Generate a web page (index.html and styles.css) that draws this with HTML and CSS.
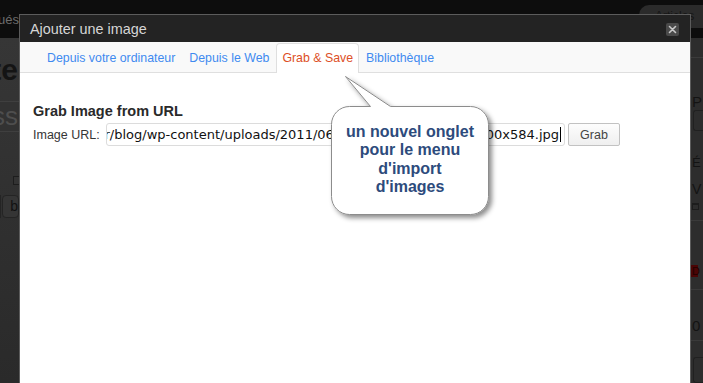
FILE: index.html
```html
<!DOCTYPE html>
<html lang="fr">
<head>
<meta charset="utf-8">
<title>Ajouter une image</title>
<link rel="stylesheet" href="styles.css">
</head>
<body>
<div class="admin">
  <div class="topbar">
    <div class="crumb"><span>Marqués</span></div>
    <div class="pill">Articles</div>
  </div>
  <div class="admin-main">
    <div class="side-left">
      <div class="ltitle"><span>Modifier la note</span></div>
      <div class="lfield"><span>wordpress</span></div>
      <div class="lcheck"></div>
      <div class="lbuttons"><span class="lbtn lbtn-a"></span><span class="lbtn lbtn-b">b</span></div>
    </div>
    <div class="center"></div>
    <div class="side-right">
      <div class="rpanel rp-head"><span>P</span></div>
      <div class="rbox"></div>
      <div class="rtext rt-e">É</div>
      <div class="rtext rt-v">V</div>
      <div class="rcal"></div>
      <div class="rline"></div>
      <div class="rred">D</div>
      <div class="rline rline-2"></div>
      <div class="rtext rt-0">0</div>
      <div class="rline rline-3"></div>
      <div class="rbox rbox-2"></div>
    </div>
  </div>
</div>

<div class="modal">
  <div class="modal-title">
    <span class="modal-name">Ajouter une image</span>
    <button class="close" aria-label="Fermer">
      <svg width="13" height="13" viewBox="0 0 13 13"><path d="M3.5 3.5 L9.5 9.5 M9.5 3.5 L3.5 9.5" stroke="#c8c8c8" stroke-width="1.6" stroke-linecap="round"/></svg>
    </button>
  </div>
  <nav class="tabs">
    <a class="tab">Depuis votre ordinateur</a>
    <a class="tab">Depuis le Web</a>
    <a class="tab active">Grab &amp; Save</a>
    <a class="tab">Bibliothèque</a>
  </nav>
  <div class="modal-body">
    <h3 class="grab-title">Grab Image from URL</h3>
    <div class="url-row">
      <label class="url-label">Image URL:</label>
      <div class="url-input"><span class="url-text">http://www.wordpress-fr/blog/wp-content/uploads/2011/06/capture-ecran-saved-800x584.jpg</span><span class="caret"></span></div>
      <button class="grab-btn">Grab</button>
    </div>
  </div>
</div>

<div class="callout">
  <svg class="callout-shape" width="180" height="160" viewBox="0 0 180 160">
    <defs>
      <filter id="sh" x="-20%" y="-20%" width="150%" height="150%">
        <feDropShadow dx="3" dy="3" stdDeviation="2.5" flood-color="#000" flood-opacity="0.45"/>
      </filter>
    </defs>
    <path d="M23.5 36.5 L44.5 36.5 L19.5 6.5 L64.5 36.5 L144.5 36.5 A18 18 0 0 1 162.5 54.5 L162.5 126.5 A18 18 0 0 1 144.5 144.5 L23.5 144.5 A18 18 0 0 1 5.5 126.5 L5.5 54.5 A18 18 0 0 1 23.5 36.5 Z" fill="#fff" stroke="#8c8c8c" stroke-width="1" filter="url(#sh)"/>
  </svg>
  <div class="callout-text">un nouvel onglet<br>pour le menu<br>d'import<br>d'images</div>
</div>
</body>
</html>
```
FILE: styles.css
```css
* { box-sizing: border-box; margin: 0; padding: 0; }
html, body { width: 703px; height: 383px; overflow: hidden; }
body {
  position: relative;
  background: #2c2c2c;
  font-family: "Liberation Sans", Arial, sans-serif;
}

/* dimmed admin page behind the dialog */
.admin { display: flex; flex-direction: column; height: 383px; }
.topbar { height: 38px; background: #0d0d0d; display: flex; align-items: flex-start; flex-shrink: 0; }
.crumb {
  width: 19px; overflow: hidden; display: flex; justify-content: flex-end;
  white-space: nowrap; color: #6c6c6c; font-size: 13px; line-height: 40px;
}
.pill {
  margin-left: auto; margin-top: 5px; width: 64px; height: 23px;
  background: #2b2b2b; border-radius: 10px 0 0 0;
  font-size: 12px; color: #151515; padding: 4px 0 0 16px; white-space: nowrap; overflow: hidden;
}
.admin-main { flex: 1; display: flex; min-height: 0; }
.side-left {
  width: 19px; overflow: hidden; display: flex; flex-direction: column;
  background: linear-gradient(#363636, #2a2a2a);
}
.ltitle {
  padding-top: 15px; height: 49px; display: flex; justify-content: flex-end;
  white-space: nowrap; font-size: 30px; line-height: 34px; font-weight: bold; color: #141414;
  padding-right: 1px;
}
.lfield {
  margin-top: 14px; height: 31px; border-top: 1px solid #3f3f3f; border-bottom: 1px solid #3f3f3f;
  background: #323232; display: flex; justify-content: flex-end; white-space: nowrap;
  font-size: 26px; line-height: 28px; color: #4e4e4e; padding-right: 1px;
}
.lcheck {
  margin: 44px 0 0 13px; width: 9px; height: 9px; border: 1px solid #1d1d1d; background: #333;
}
.lbuttons { margin-top: 10px; display: flex; gap: 1px; height: 23px; }
.lbtn { height: 23px; border: 1px solid #242424; border-radius: 4px; background: #353535; }
.lbtn-a { width: 3px; border-left: none; border-radius: 0 4px 4px 0; }
.lbtn-b { width: 30px; padding-left: 7px; font-size: 14px; line-height: 20px; color: #111; }
.center { flex: 1; }

.side-right {
  width: 12px; background: #2d2d2d; display: flex; flex-direction: column; overflow: hidden;
  color: #131313; font-size: 13px;
}
.rpanel { border-top: 1px solid #3b3b3b; }
.rp-head { margin-top: 19px; height: 63px; padding: 36px 0 0 1px; line-height: 16px; font-size: 15px; }
.rbox { margin-left: 2px; width: 12px; height: 32px; border: 1px solid #202020; border-right: none; border-radius: 3px 0 0 3px; }
.rtext { padding-left: 1px; line-height: 16px; }
.rt-e { margin-top: 24px; }
.rt-v { margin-top: 10px; font-size: 14px; }
.rcal { margin: 6px 0 0 1px; width: 7px; height: 9px; border: 1px solid #1c1c1c; border-top-width: 2px; }
.rline { margin-top: 10px; height: 1px; background: #3a3a3a; }
.rred { margin-top: 44px; width: 7px; height: 12px; background: #4a0505; color: #220000; font-size: 11px; line-height: 12px; padding-left: 1px; }
.rline-2 { margin-top: 12px; }
.rt-0 { margin-top: 29px; font-size: 15px; }
.rline-3 { margin-top: 6px; }
.rbox-2 { margin-top: 16px; height: 40px; }

/* dialog */
.modal {
  position: absolute; left: 19px; top: 14px; width: 672px; height: 380px;
  border: 1px solid #5c5c5c; background: #fff; display: flex; flex-direction: column;
}
.modal-title {
  height: 27px; background: #232323; display: flex; align-items: center;
  padding: 0 11px 0 10px; flex-shrink: 0;
}
.modal-name { color: #d6d6d6; font-size: 14.4px; flex: 1; padding-top: 1px; }
.close {
  width: 13px; height: 13px; border: none; border-radius: 2px; background: #4a4a4a;
  display: flex; align-items: center; justify-content: center; margin-top: 1px;
}
.tabs {
  height: 31px; background: #f9f9f9; border-bottom: 1px solid #dfdfdf;
  display: flex; align-items: flex-end; padding-left: 20px; flex-shrink: 0;
}
.tab {
  height: 30px; margin-bottom: -1px; padding: 0 6px; border: 1px solid transparent; border-bottom: none;
  font-size: 12.35px; line-height: 28px; color: #3f8af0; white-space: nowrap;
}
.tab.active {
  background: #fff; border-color: #dfdfdf; border-radius: 4px 4px 0 0; color: #dd4f27;
  padding: 0 5px;
}
.modal-body { padding: 29px 13px 0; }
.grab-title { font-size: 14.5px; line-height: 18px; font-weight: bold; color: #2a2a2a; }
.url-row { margin-top: 3px; display: flex; align-items: center; height: 23px; }
.url-label { font-size: 12.5px; color: #353535; width: 73px; flex-shrink: 0; }
.url-input {
  width: 459px; height: 23px; border: 1px solid #dcdcdc; border-radius: 3px;
  display: flex; justify-content: flex-end; align-items: center; overflow: hidden;
  padding-right: 3px; flex-shrink: 0;
}
.url-text {
  white-space: nowrap; font-family: "DejaVu Sans", Verdana, sans-serif; font-size: 13px; color: #111;
  flex-shrink: 0;
}
.caret { width: 1px; height: 15px; background: #000; margin-left: 1px; flex-shrink: 0; }
.grab-btn {
  margin-left: 3px; width: 52px; height: 23px; border: 1px solid #c2c2c2; border-radius: 2px;
  background: linear-gradient(#fdfdfd, #efefef); font-family: "Liberation Sans", Arial, sans-serif;
  font-size: 12.5px; color: #444;
}

/* speech bubble overlay */
.callout { position: absolute; left: 326px; top: 70px; width: 180px; height: 160px; }
.callout-shape { display: block; }
.callout-text {
  position: absolute; left: 5px; top: 53px; width: 158px; text-align: center;
  font-size: 16px; line-height: 18.3px; font-weight: bold; color: #2d4b7c;
}
```
